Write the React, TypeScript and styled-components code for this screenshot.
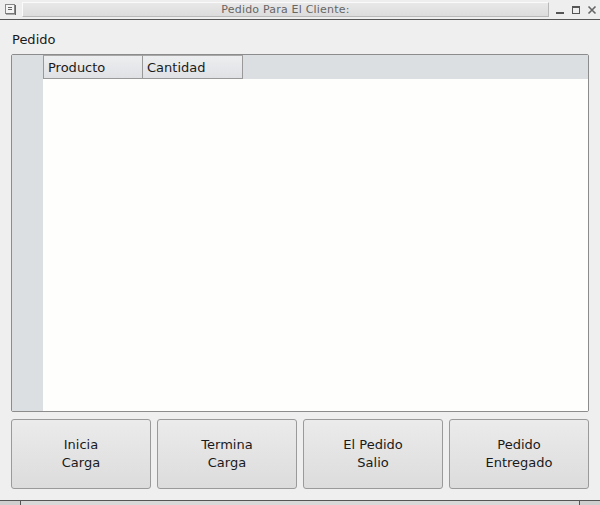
import React from "react";
import styled, { createGlobalStyle } from "styled-components";

const Global = createGlobalStyle`
  html, body { margin: 0; padding: 0; background: #efefef; }
  body { font-family: "DejaVu Sans", sans-serif; font-size: 13px; color: #1a1a1a; }
  #root { width: 600px; height: 505px; overflow: hidden; }
`;

const Window = styled.div`
  width: 600px;
  height: 505px;
  display: flex;
  flex-direction: column;
  background: #efefef;
  & > * { flex-shrink: 0; }
`;

const TitleBar = styled.div`
  height: 19px;
  display: flex;
  align-items: center;
  padding: 0 3px 0 4px;
  border-bottom: 1px solid #555;
  background: #eeeeee;
`;

const MenuIcon = styled.div`
  width: 12px;
  height: 12px;
  display: flex;
  align-items: center;
  justify-content: center;
  margin-right: 6px;
`;

const TitleField = styled.div`
  flex: 1;
  height: 13px;
  border: 1px solid #b8b8b8;
  border-top-color: #fafafa;
  border-left-color: #fafafa;
  background: linear-gradient(#e8e8e8, #dcdcdc);
  display: flex;
  align-items: center;
  justify-content: center;
  font-size: 11px;
  color: #666;
  line-height: 13px;
  letter-spacing: 0.2px;
`;

const WinButtons = styled.div`
  display: flex;
  align-items: center;
  gap: 6px;
  margin-left: 6px;
`;

const Body = styled.div`
  display: flex;
  flex-direction: column;
  padding: 0 11px;
  & > * { flex-shrink: 0; }
`;

const Label = styled.div`
  height: 34px;
  display: flex;
  align-items: center;
  padding: 5px 0 0 1px;
  box-sizing: border-box;
`;

const Table = styled.div`
  height: 358px;
  box-sizing: border-box;
  border: 1px solid #8c8c8c;
  border-radius: 2px;
  display: grid;
  grid-template-columns: 31px 1fr;
  grid-template-rows: 24px 1fr;
  background: #fdfdfb;
  overflow: hidden;
`;

const Corner = styled.div`
  background: #dcdfe2;
`;

const HeaderRow = styled.div`
  background: #dcdfe2;
  display: flex;
  align-items: stretch;
`;

const HeaderCell = styled.div<{ first?: boolean }>`
  width: 100px;
  border: 1px solid #999;
  border-left: ${(p) => (p.first ? "1px solid #999" : "none")};
  border-top-color: #a8a8a8;
  background: linear-gradient(#eceef0, #dfe1e4);
  display: flex;
  align-items: center;
  padding-left: 4px;
  box-sizing: border-box;
  height: 24px;
`;

const RowHeader = styled.div`
  background: #dcdfe2;
`;

const Cells = styled.div`
  background: #fefefc;
`;

const Buttons = styled.div`
  display: grid;
  grid-template-columns: repeat(4, 140px);
  gap: 6px;
  margin-top: 7px;
`;

const Btn = styled.button`
  height: 70px;
  border: 1px solid #9a9a9a;
  border-radius: 3px;
  background: linear-gradient(#ebebeb, #dcdcdc);
  font-family: "DejaVu Sans", sans-serif;
  font-size: 13px;
  color: #1a1a1a;
  line-height: 18px;
  padding: 0;
  display: flex;
  flex-direction: column;
  align-items: center;
  justify-content: center;
`;

const Bottom = styled.div`
  margin-top: 11px;
  height: 5px;
  box-sizing: border-box;
  border-top: 1px solid #555;
  display: grid;
  grid-template-columns: 20px 1fr 20px;
  background: #cfcfcf;
`;

const BottomSeg = styled.div<{ mid?: boolean }>`
  border-right: ${(p) => (p.mid ? "1px solid #555" : "none")};
  border-left: ${(p) => (p.mid ? "1px solid #555" : "none")};
  background: ${(p) => (p.mid ? "#d8d8d8" : "#cfcfcf")};
`;

const labels: [string, string][] = [
  ["Inicia", "Carga"],
  ["Termina", "Carga"],
  ["El Pedido", "Salio"],
  ["Pedido", "Entregado"],
];

export default function App() {
  return (
    <>
      <Global />
      <Window>
        <TitleBar>
          <MenuIcon>
            <svg width="11" height="11" viewBox="0 0 11 11">
              <rect x="0.5" y="0.5" width="9" height="9" fill="#f4f4f4" stroke="#888" />
              <rect x="1" y="9.5" width="10" height="1" fill="#666" />
              <rect x="10" y="1" width="1" height="10" fill="#666" />
              <rect x="3" y="3" width="4" height="1" fill="#666" />
              <rect x="3" y="5" width="4" height="1" fill="#666" />
            </svg>
          </MenuIcon>
          <TitleField>Pedido Para El Cliente:</TitleField>
          <WinButtons>
            <svg width="10" height="10" viewBox="0 0 10 10">
              <rect x="1" y="7" width="8" height="2" fill="#555" />
            </svg>
            <svg width="10" height="10" viewBox="0 0 10 10">
              <rect x="1.5" y="1.5" width="7" height="7" fill="none" stroke="#555" />
              <rect x="1" y="1" width="8" height="2" fill="#555" />
            </svg>
            <svg width="10" height="10" viewBox="0 0 10 10">
              <path d="M1.5 1.5 L8.5 8.5 M8.5 1.5 L1.5 8.5" stroke="#666" strokeWidth="1.6" />
            </svg>
          </WinButtons>
        </TitleBar>
        <Body>
          <Label>Pedido</Label>
          <Table>
            <Corner />
            <HeaderRow>
              <HeaderCell first>Producto</HeaderCell>
              <HeaderCell>Cantidad</HeaderCell>
            </HeaderRow>
            <RowHeader />
            <Cells />
          </Table>
          <Buttons>
            {labels.map(([a, b]) => (
              <Btn key={a + b}>
                <span>{a}</span>
                <span>{b}</span>
              </Btn>
            ))}
          </Buttons>
        </Body>
        <Bottom>
          <BottomSeg />
          <BottomSeg mid />
          <BottomSeg />
        </Bottom>
      </Window>
    </>
  );
}
